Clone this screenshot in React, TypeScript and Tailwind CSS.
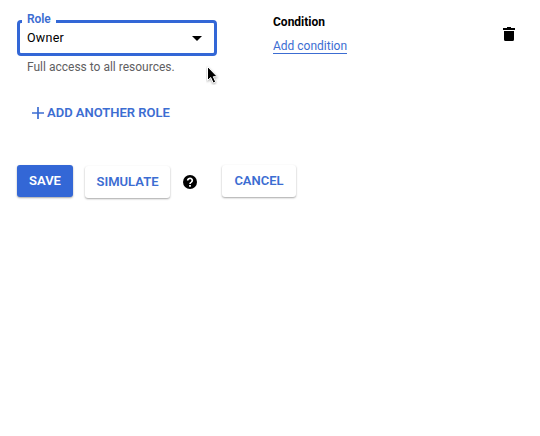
import React from "react";

function RoleField() {
  return (
    <div className="w-[256px]">
      <div className="relative flex h-9 w-[200px] items-center justify-between rounded-[4px] border-[3px] border-[#3367d6] pl-[7px] pr-[12px]">
        <span className="absolute -top-[11px] left-[2px] bg-white px-[5px] text-[12px] leading-[15px] font-semibold tracking-[-0.1px] text-[#3c6dd2]">
          Role
        </span>
        <span className="text-[12.5px] leading-4 tracking-[0.25px] text-black">Owner</span>
        <svg width="10" height="5" viewBox="0 0 10 5" aria-hidden="true">
          <path d="M0 0h10L5 5z" fill="#000" />
        </svg>
      </div>
      <p className="pt-[3px] pl-[10px] text-[12px] leading-4 text-[#5f6062]">
        Full access to all resources.
      </p>
    </div>
  );
}

function TrashIcon() {
  return (
    <svg width="12" height="14" viewBox="0 0 12 14" aria-hidden="true">
      <path d="M4 0h4v1h4v2H0V1h4zM1 4h10v8.500q0 1.500-1.500 1.500h-7Q1 14 1 12.500z" fill="#000" />
    </svg>
  );
}

function HelpIcon() {
  return (
    <svg width="14" height="14" viewBox="0 0 14 14" aria-hidden="true">
      <circle cx="7" cy="7" r="7" fill="#000" />
      <path d="M4.700 5.500a2.300 2.100 0 1 1 3.700 1.600Q7 8 7 9" fill="none" stroke="#fff" strokeWidth="1.700" />
      <path d="M6.100 10h1.800v1.700H6.100z" fill="#fff" />
    </svg>
  );
}

function Cursor() {
  return (
    <svg className="absolute top-[65px] left-[206px]" width="13" height="20" viewBox="0 0 13 20" aria-hidden="true">
      <path
        d="M1.500 1.500v14l3.200-3 2.500 5.500 2.500-1.100-2.400-5.200h4z"
        fill="#000"
        stroke="#fff"
        strokeWidth="1"
        className="drop-shadow-[0_1px_1px_rgba(0,0,0,0.35)]"
      />
    </svg>
  );
}

export default function App() {
  return (
    <main className="relative h-[436px] w-[540px] overflow-hidden bg-white pt-5 pl-[17px] font-[Roboto,sans-serif]">
      <section className="flex items-start">
        <RoleField />
        <div className="-mt-[6px] flex w-[230px] flex-col items-start">
          <span className="text-[12px] leading-4 font-bold text-black">Condition</span>
          <a className="mt-[9px] border-b border-[#3c6dd2] text-[12px] leading-[14px] text-[#3c6dd2]">
            Add condition
          </a>
        </div>
        <button type="button" aria-label="Delete role" className="mt-[7px]">
          <TrashIcon />
        </button>
      </section>

      <button type="button" className="mt-[30px] ml-[15px] flex items-center gap-[3px] text-[#3c6dd2]">
        <svg className="-mt-px" width="12" height="12" viewBox="0 0 12 12" aria-hidden="true">
          <path d="M6 0v12M0 6h12" stroke="currentColor" strokeWidth="1.700" />
        </svg>
        <span className="text-[13px] leading-4 font-semibold">ADD ANOTHER ROLE</span>
      </button>

      <div className="mt-[44px] flex items-start text-[13px] font-semibold text-[#3c6dd2]">
        <button type="button" className="h-8 w-14 rounded-[3px] bg-[#3367d6] text-white shadow-[0_1px_2px_rgba(0,0,0,0.35)]">
          SAVE
        </button>
        <button type="button" className="mt-px ml-3 h-8 w-[85px] rounded-[3px] shadow-[0_1px_2px_rgba(0,0,0,0.35)]">
          SIMULATE
        </button>
        <span className="mt-[10px] ml-[13px]">
          <HelpIcon />
        </span>
        <button type="button" className="ml-[25px] h-8 w-[74px] rounded-[3px] shadow-[0_1px_2px_rgba(0,0,0,0.35)]">
          CANCEL
        </button>
      </div>
      <Cursor />
    </main>
  );
}
